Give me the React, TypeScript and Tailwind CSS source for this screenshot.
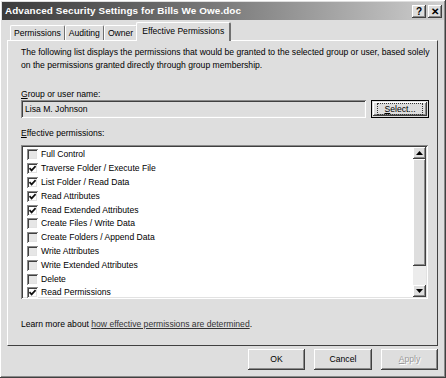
import type { ReactNode } from 'react';

const raised =
  'shadow-[inset_-1px_-1px_0_#404040,inset_1px_1px_0_#ffffff,inset_-2px_-2px_0_#8a8a8a]';
const sunken =
  'shadow-[inset_1px_1px_0_#8a8a8a,inset_-1px_-1px_0_#ffffff,inset_2px_2px_0_#404040,inset_-2px_-2px_0_#e2e2e2]';

const perms: [string, boolean][] = [
  ['Full Control', false],
  ['Traverse Folder / Execute File', true],
  ['List Folder / Read Data', true],
  ['Read Attributes', true],
  ['Read Extended Attributes', true],
  ['Create Files / Write Data', false],
  ['Create Folders / Append Data', false],
  ['Write Attributes', false],
  ['Write Extended Attributes', false],
  ['Delete', false],
  ['Read Permissions', true],
];

function Tab({ label, active }: { label: string; active?: boolean }) {
  if (active) {
    return (
      <div className="relative z-10 -mb-px -ml-[1px] h-[19px] border-l border-t border-white border-r-2 border-r-[#707070] px-[5px] pt-[2px] bg-[#dedede] rounded-t-[2px]">
        {label}
      </div>
    );
  }
  return (
    <div className="mt-[3px] h-[15px] border-l border-t border-white border-r border-r-[#707070] px-[3px] pt-[1px] rounded-t-[2px]">
      {label}
    </div>
  );
}

function Check({ on }: { on: boolean }) {
  return (
    <div
      className={`w-[11px] h-[11px] shrink-0 flex items-center justify-center ${sunken} ${
        on ? 'bg-white' : 'bg-[#e6e6e6]'
      }`}
    >
      {on && (
        <svg width="9" height="9" viewBox="0 0 9 9">
          <path d="M1.5 4.2 L3.6 6.4 L7.6 2.2" fill="none" stroke="#111" strokeWidth="1.7" />
        </svg>
      )}
    </div>
  );
}

function Btn({ children, className = '' }: { children: ReactNode; className?: string }) {
  return (
    <div className={`h-[21px] flex items-center justify-center bg-[#dedede] ${raised} ${className}`}>
      {children}
    </div>
  );
}

function Arrow({ up }: { up?: boolean }) {
  return (
    <div className={`w-[13px] h-[12px] flex items-center justify-center bg-[#dedede] ${raised}`}>
      <svg width="7" height="4" viewBox="0 0 7 4">
        <path d={up ? 'M3.5 0 L7 4 L0 4 Z' : 'M0 0 L7 0 L3.5 4 Z'} fill="#000" />
      </svg>
    </div>
  );
}

export default function App() {
  return (
    <div
      className={`w-[446px] h-[378px] bg-[#dedede] p-[2px] text-[8.6px] text-black flex flex-col ${raised}`}
      style={{ fontFamily: '"Liberation Sans", Arial, sans-serif' }}
    >
      <div className="h-[18px] flex items-center justify-between pl-[3px] pr-[2px] bg-gradient-to-r from-[#3c3c3c] via-[#7c7c7c] to-[#cfcfcf]">
        <span className="text-white font-bold text-[9.9px] tracking-[0.1px]">
          Advanced Security Settings for Bills We Owe.doc
        </span>
        <div className="flex gap-[2px]">
          <div className={`w-[14px] h-[13px] flex items-center justify-center bg-[#dedede] font-bold text-[10px] ${raised}`}>?</div>
          <div className={`w-[14px] h-[13px] flex items-center justify-center bg-[#dedede] font-bold text-[10px] ${raised}`}>✕</div>
        </div>
      </div>

      <div className="flex pl-[8px] pt-[2px] h-[20px] items-start">
        <Tab label="Permissions" />
        <Tab label="Auditing" />
        <Tab label="Owner" />
        <Tab label="Effective Permissions" active />
      </div>

      <div className="ml-[5px] w-[431px] h-[306px] border-l border-t border-white border-r border-b border-r-[#404040] border-b-[#404040] pl-[13px] pr-[8px] pt-[5px] flex flex-col">
        <p className="leading-[13px] whitespace-nowrap">
          The following list displays the permissions that would be granted to the selected group or user, based solely
          <br />
          on the permissions granted directly through group membership.
        </p>

        <div className="mt-[16px] leading-[12px]">
          <u>G</u>roup or user name:
        </div>
        <div className="flex gap-[5px] mt-0">
          <div className={`w-[345px] h-[18px] flex items-center pl-[4px] ${sunken}`}>Lisa M. Johnson</div>
          <div className="w-[58px] h-[18px] border border-black p-[1px]">
            <div className={`w-full h-full flex items-center justify-center ${raised}`}>
              <div className="border border-dotted border-[#333] px-[6px] leading-[10px]">
                <u>S</u>elect...
              </div>
            </div>
          </div>
        </div>

        <div className="mt-[9px] leading-[12px]">
          <u>E</u>ffective permissions:
        </div>
        <div className={`mt-[6px] w-[407px] h-[154px] bg-white flex p-[2px] ${sunken}`}>
          <div className="flex-1 pl-[4px] pt-[1px]">
            {perms.map(([name, on]) => (
              <div key={name} className="h-[13.8px] flex items-center gap-[3px]">
                <Check on={on} />
                <span>{name}</span>
              </div>
            ))}
          </div>
          <div className="w-[13px] flex flex-col bg-[#ececec]">
            <Arrow up />
            <div className={`h-[107px] bg-[#dedede] ${raised}`} />
            <div className="flex-1" />
            <Arrow />
          </div>
        </div>

        <div className="mt-[19px]">
          Learn more about{' '}
          <span className="underline text-[#333]">how effective permissions are determined</span>.
        </div>
      </div>

      <div className="flex justify-end gap-[9px] mt-[3px] pr-[6px]">
        <Btn className="w-[57px]">OK</Btn>
        <Btn className="w-[58px]">Cancel</Btn>
        <Btn className="w-[57px] text-[#9a9a9a]">
          <span className="[text-shadow:1px_1px_0_#ffffff]">
            <u>A</u>pply
          </span>
        </Btn>
      </div>
    </div>
  );
}
